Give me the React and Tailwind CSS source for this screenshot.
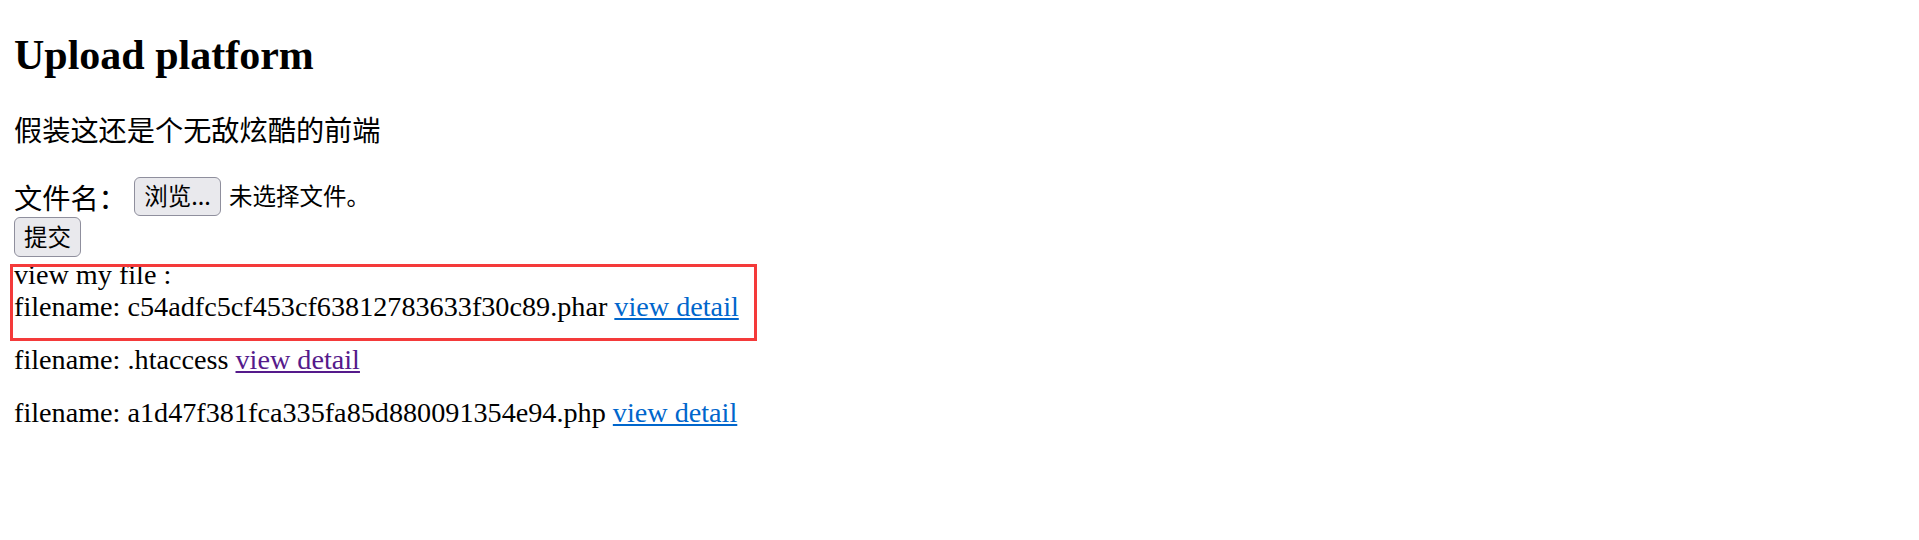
import React from 'react';

const FILES = [
  { name: 'c54adfc5cf453cf63812783633f30c89.phar', visited: false },
  { name: '.htaccess', visited: true },
  { name: 'a1d47f381fca335fa85d880091354e94.php', visited: false },
];

const serif = 'font-["Liberation_Serif","Noto_Sans_CJK_SC",serif]';

function FileLine({ file, className = '' }) {
  return (
    <div className={`h-[32px] leading-[32px] ${className}`}>
      filename: {file.name}{' '}
      <a
        href="#"
        className={`underline ${file.visited ? 'text-[#551a8b]' : 'text-[#0066cc]'}`}
      >
        view detail
      </a>
    </div>
  );
}

export default function App() {
  const [first, ...rest] = FILES;

  return (
    <div className={`min-h-[540px] w-full bg-white text-black text-[28.2px] ${serif}`}>
      <div className="pl-[14px] pt-[31px]">
        <h2 className="h-[48px] text-[42px] font-bold leading-[48px]">Upload platform</h2>
        <p className="mt-[37px] h-[32px] leading-[32px]">假装这还是个无敌炫酷的前端</p>

        {/* upload form */}
        <form className="mt-[28px]" onSubmit={(e) => e.preventDefault()}>
          <div className="flex h-[40px] items-center">
            <span className="w-[112px] shrink-0 whitespace-nowrap pt-[7px] leading-[32px]">文件名：</span>
            <button
              type="button"
              className='ml-[8px] h-[39px] w-[87px] shrink-0 rounded-[6px] border border-[#8f8f9d] bg-[#e9e9ed] text-[23.5px] leading-none font-["Noto_Sans_CJK_SC",sans-serif]'
            >
              浏览...
            </button>
            <span className='ml-[8px] whitespace-nowrap text-[23.5px] font-["Noto_Sans_CJK_SC",sans-serif]'>未选择文件。</span>
          </div>
          <button
            type="submit"
            className='mt-px h-[40px] w-[67px] rounded-[6px] border border-[#8f8f9d] bg-[#e9e9ed] text-[23.5px] leading-none font-["Noto_Sans_CJK_SC",sans-serif]'
          >
            提交
          </button>
        </form>
      </div>

      {/* file list, first entry highlighted */}
      <div className="relative">
        <div className="pl-[14px]">
          <div className="h-[32px] leading-[32px]">view my file :</div>
          <FileLine file={first} />
          {rest.map((f) => (
            <FileLine key={f.name} file={f} className="mt-[21px]" />
          ))}
        </div>
        <div className="pointer-events-none absolute left-[10px] top-[5px] h-[77px] w-[747px] border-[3px] border-[#f43a3a]" />
      </div>
    </div>
  );
}
